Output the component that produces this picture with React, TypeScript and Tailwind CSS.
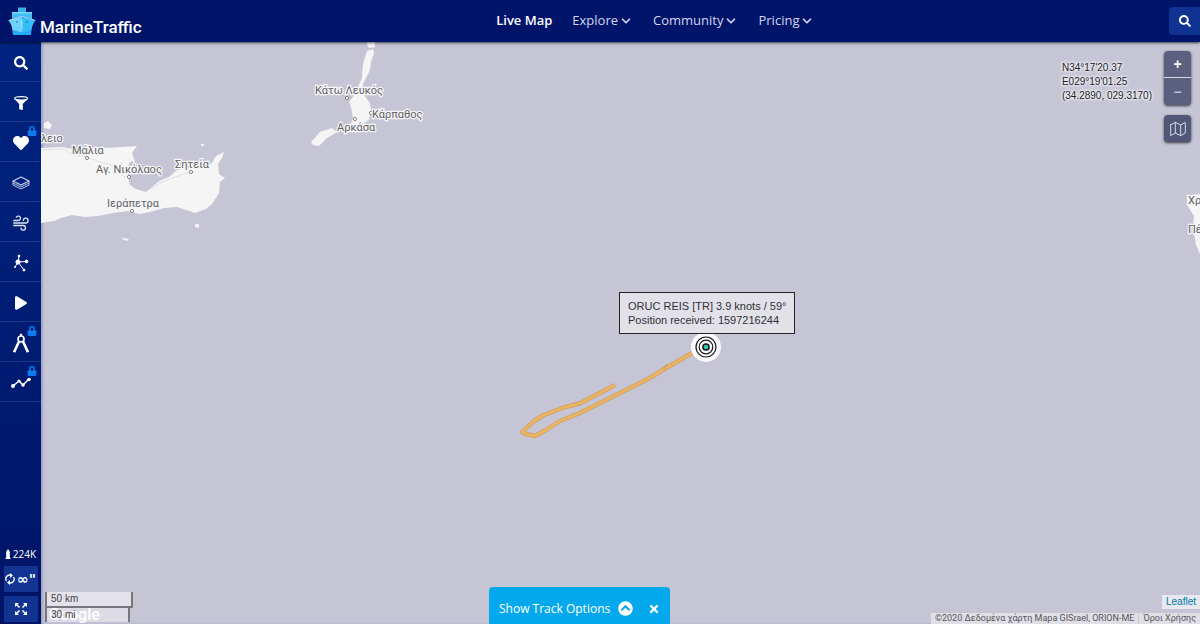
import type { ReactNode } from "react";
import { FaChevronCircleUp, FaHeart, FaLock, FaPlay, FaSearch, FaTimes } from "react-icons/fa";
import { FiChevronDown, FiMap } from "react-icons/fi";

type Tool = {
  label: string;
  icon: ReactNode;
  locked?: boolean;
};

type Place = {
  name: string;
  x: number;
  y: number;
  dot?: [number, number];
};

function FunnelIcon() {
  return (
    <svg viewBox="0 0 14 14" className="size-3.5" fill="currentColor">
      <path d="M0 2.4 5.2 8v5.2L8.8 14V8L14 2.4Z" />
      <ellipse cx="7" cy="2.4" rx="6.4" ry="1.7" fill="#00217c" stroke="currentColor" strokeWidth="1.2" />
    </svg>
  );
}

function LayersIcon() {
  return (
    <svg viewBox="0 0 18 14" className="h-3.5 w-4.5 text-[#cdd6f0]" fill="none" stroke="currentColor" strokeLinejoin="round">
      <path d="M9 1 17 5 9 9 1 5Z" strokeWidth="1.1" />
      <path d="M1 5v2l8 4 8-4V5M1 7v2l8 4 8-4V7" strokeWidth=".9" />
    </svg>
  );
}

function WindIcon() {
  return (
    <svg viewBox="0 0 16 16" className="size-4 text-[#dbe2f5]" fill="none" stroke="currentColor" strokeWidth="1.3" strokeLinecap="round">
      <path d="M.7 5.5h4.6a2.2 2.2 0 1 0-2-3.2" />
      <path d="M.7 8h12a2.4 2.4 0 1 0-2.4-2.6" />
      <path d="M.7 10.5h9.5a2.3 2.3 0 1 1-2.3 2.6" />
    </svg>
  );
}

function NetworkIcon() {
  return (
    <svg viewBox="0 0 16 18" className="h-4.5 w-4" fill="currentColor" stroke="currentColor">
      <path d="M5 8 6 2M5 8l8-.5M5 8l6 8M5 8l-3 5" fill="none" />
      <circle cx="5" cy="8" r="2.1" />
      <circle cx="6" cy="2" r=".9" />
      <circle cx="13.5" cy="7.5" r="1.4" />
      <circle cx="11" cy="16" r="1" />
      <circle cx="2" cy="13" r=".6" />
    </svg>
  );
}

function CompassIcon() {
  return (
    <svg viewBox="0 0 18 20" className="h-5 w-4.5" fill="none" stroke="currentColor">
      <circle cx="9" cy="6" r="3" strokeWidth="1.7" />
      <path d="M9 3V.8" strokeWidth="2.2" />
      <path d="M7 8.5 2 19.3M11 8.5l5 10.8" strokeWidth="2.6" />
    </svg>
  );
}

function RouteIcon() {
  return (
    <svg viewBox="0 0 20 12" className="h-3 w-5" fill="currentColor">
      <path d="m2 9 6-5 4 4 6-6" fill="none" stroke="currentColor" strokeWidth="1.5" />
      <circle cx="2" cy="9" r="2" />
      <circle cx="8" cy="4" r="1.6" />
      <circle cx="12" cy="8" r="1.8" />
      <circle cx="18" cy="2.5" r="1.8" />
    </svg>
  );
}

function ShipLogo() {
  return (
    <svg viewBox="0 0 28 28" className="h-7 w-7" aria-hidden="true">
      <path d="M10 .5h8V5h-8Z" fill="#3aaeea" />
      <path d="M4 5h20v7L14 9.5 4 12Z" fill="#43bdf5" />
      <path d="M4 5h20v1.5H4Z" fill="#7ad8fb" />
      <path d="M0 13 3.5 12.5 14 10v18H5C4.5 22 4 17 0 13Z" fill="#6dd3fc" />
      <path d="M28 13 24.500 12.500 14 10v18h9c.5-6 1-11 5-15Z" fill="#35bdf8" />
      <path d="m2 13 12-3.500L26 13" fill="none" stroke="#d2f3ff" strokeWidth=".8" />
      <path d="m5 23 9 2.500 9-2.500v5H5Z" fill="#22aaf2" />
      <path d="M14 13.500v9" stroke="#d2f3ff" strokeWidth=".7" />
      <path d="M8 15h2M18 15h2" stroke="#1173bd" strokeWidth="1" />
    </svg>
  );
}

function RefreshIcon() {
  return (
    <svg viewBox="0 0 10 12" className="h-3 w-2.5 shrink-0" fill="none" stroke="currentColor">
      <path d="M1.5 8A3.8 3.8 0 0 1 6 2.3M8.5 4A3.8 3.8 0 0 1 4 9.7" strokeWidth="1.3" />
      <path d="m5 0 3 2.5L5 5ZM5 7 2 9.5 5 12Z" fill="currentColor" stroke="none" />
    </svg>
  );
}

function ExpandIcon() {
  return (
    <svg viewBox="0 0 12 12" className="size-3" fill="currentColor" stroke="currentColor">
      <path d="m1 1 3.5 3.5M11 1 7.5 4.5M1 11l3.5-3.5M11 11 7.5 7.5" strokeWidth="1.6" />
      <path d="M0 0h4L0 4ZM12 0H8l4 4ZM0 12V8l4 4ZM12 12V8l-4 4Z" stroke="none" />
    </svg>
  );
}

const tools: Tool[] = [
  { label: "Search map", icon: <FaSearch className="size-3.5" /> },
  { label: "Filters", icon: <FunnelIcon /> },
  { label: "My fleets", icon: <FaHeart className="size-4" />, locked: true },
  { label: "Layers", icon: <LayersIcon /> },
  { label: "Weather", icon: <WindIcon /> },
  { label: "Density maps", icon: <NetworkIcon /> },
  { label: "Playback", icon: <FaPlay className="h-3.5 w-3" /> },
  { label: "Measure distance", icon: <CompassIcon />, locked: true },
  { label: "Route planner", icon: <RouteIcon />, locked: true },
];

const menus = ["Explore", "Community", "Pricing"];

const places: Place[] = [
  { name: "λειο", x: 41, y: 142 },
  { name: "Μάλια", x: 72, y: 154, dot: [87, 158] },
  { name: "Αγ. Νικόλαος", x: 96, y: 173, dot: [129, 177] },
  { name: "Σητεία", x: 175, y: 168, dot: [191, 172] },
  { name: "Ιεράπετρα", x: 107, y: 207, dot: [132, 211] },
  { name: "Κάτω Λευκός", x: 315, y: 94, dot: [347, 98] },
  { name: "Κάρπαθος", x: 372, y: 118, dot: [371, 113] },
  { name: "Αρκάσα", x: 337, y: 131, dot: [355, 119] },
  { name: "Χρ", x: 1188, y: 204 },
  { name: "Πέ", x: 1188, y: 233 },
];

const track =
  "M615 385 594 396 581 403 562 408 544 415 534 421 522 432 526 434 535 436 546 430 560 421 580 413 608 399 630 388 648 379 666 368 694 352";

function MapCanvas() {
  return (
    <svg
      viewBox="41 42 1159 582"
      preserveAspectRatio="xMinYMin slice"
      className="absolute inset-0 h-full w-full"
      role="img"
      aria-label="Vessel map"
    >
      <g fill="#f5f5f5">
        <path d="M41 148 62 147 72 149 104 148 122 147 137 146 132 153 134 160 129 163 128 176 130 185 136 189 146 192 151 188 159 181 169 177 177 170 190 168 202 168 212 163 216 156 224 152 222 158 218 164 219 174 225 178 220 182 219 193 212 204 206 209 195 213 186 210 177 207 164 208 150 212 139 214 128 211 113 213 98 216 85 217 72 215 61 218 54 221 41 223Z" />
        <path d="M44 123 48 121 52 125 50 129 44 128Z" />
        <path d="m368 41 7 0 0 6-6 1-2-4ZM367 51l6-2 1 4-3 9-1 8-7 14-1 7 1 2 3 5 4 5 1 8-2 9-9 6-8 3-2-3 3-8-2-11-2-5 6-8 4-9 3-7 1-14ZM311 142l9-10 12-4 5 4-10 6-8 8-6-1Z" />
        <path d="m1187 196 13-2v60l-4-9-3-18 1-11-7-11ZM133 156l2 6-2 2ZM195 224l4 0 0 4-4-1ZM123 238l6 1-2 2-5-2ZM201 144h3v2h-3Z" />
      </g>
      <path
        d="M41 150 64 149 71 154 85 157 101 162 115 166 125 178M151 189l13-8 23-8 8-1"
        fill="none"
        stroke="#e2e2e6"
        strokeWidth="1.2"
      />

      <g className="font-['Roboto',sans-serif] text-[11px]">
        {places.map((place) => (
          <g key={place.name}>
            {place.dot && (
              <circle cx={place.dot[0]} cy={place.dot[1]} r="1.6" fill="#fff" stroke="#777" strokeWidth=".9" />
            )}
            <text x={place.x} y={place.y} fill="#606064" stroke="#f7f7f9" strokeWidth="2.5" paintOrder="stroke">
              {place.name}
            </text>
          </g>
        ))}
      </g>

      <path d={track} fill="none" stroke="#cfa06f" strokeWidth="4.4" strokeLinejoin="round" />
      <path d={track} fill="none" stroke="#ebb45f" strokeWidth="2.8" strokeLinejoin="round" />
      <path d="m664 369 3-5" stroke="#cc8e58" />
      <circle cx="706" cy="347" r="15" fill="#fafafc" />
      <g fill="none" stroke="#15191c">
        <circle cx="706" cy="347" r="10" strokeWidth="1.2" />
        <circle cx="706" cy="347" r="6.8" strokeWidth="1.2" />
        <circle cx="706" cy="347" r="3.1" fill="#32c7b1" strokeWidth="1.5" />
      </g>
    </svg>
  );
}

function Header() {
  return (
    <header className="relative z-20 flex h-[42px] shrink-0 items-center bg-[#00146a] text-white shadow-sm shadow-black/50">
      <a href="#" className="flex items-end gap-1 pl-2">
        <ShipLogo />
        <span className="-mb-0.5 font-['Roboto',sans-serif] text-[17px] leading-5 font-medium">MarineTraffic</span>
      </a>
      <nav className="flex flex-1 items-center justify-center gap-5 font-['Open_Sans',sans-serif] text-[13px]">
        <a href="#" className="font-semibold">
          Live Map
        </a>
        {menus.map((menu) => (
          <button key={menu} type="button" className="flex items-center gap-px text-[#d2d6ed]">
            {menu}
            <FiChevronDown className="size-3.5" strokeWidth={3} />
          </button>
        ))}
      </nav>
      <button
        type="button"
        aria-label="Search"
        className="flex h-7 w-[31px] items-center justify-center rounded-l-sm bg-[#103291]"
      >
        <FaSearch className="size-3" />
      </button>
    </header>
  );
}

function Sidebar() {
  return (
    <aside className="flex w-[41px] shrink-0 flex-col bg-linear-to-b from-[#002480] to-[#001467] text-white">
      {tools.map((tool) => (
        <button
          key={tool.label}
          type="button"
          aria-label={tool.label}
          className="relative flex h-10 items-center justify-center border-b border-[#193b8c] pt-0.5"
        >
          {tool.icon}
          {tool.locked && <FaLock className="absolute top-1 right-1 size-2.5 text-[#1179f0]" />}
        </button>
      ))}
      <div className="mt-auto flex flex-col items-center gap-1 pb-0.5 font-['Open_Sans',sans-serif]">
        <div className="flex items-center gap-0.5 text-[10px] leading-4">
          <svg viewBox="0 0 6 11" className="h-2.5 w-1.5" fill="currentColor">
            <path d="M3 0 5 3v6l1 2H0l1-2V3Z" />
          </svg>
          224K
        </div>
        <button type="button" aria-label="Refresh" className="flex h-[26px] w-[34px] items-center justify-center gap-0.5 bg-[#113493]">
          <RefreshIcon />
          <span className="font-['DejaVu_Sans',sans-serif] text-[14px] leading-4 font-bold">∞"</span>
        </button>
        <button type="button" aria-label="Full screen" className="flex h-[26px] w-[34px] items-center justify-center bg-[#113493]">
          <ExpandIcon />
        </button>
      </div>
    </aside>
  );
}

export default function App() {
  return (
    <div className="flex h-screen flex-col overflow-hidden bg-[#c6c5d6]">
      <Header />
      <div className="flex min-h-0 flex-1">
        <Sidebar />
        <main className="relative min-w-0 flex-1 overflow-hidden font-['Liberation_Sans',sans-serif] shadow-[inset_2px_0_2px_#9ca4c5]">
          <MapCanvas />

          <div className="absolute top-[250px] left-[578px] border border-[#252529] bg-[#e2e1e8] px-2 py-1.5 text-[11px] leading-[14px] whitespace-nowrap text-[#303038]">
            <p>ORUC REIS [TR] 3.9 knots / 59°</p>
            <p>Position received: 1597216244</p>
          </div>

          <div className="absolute top-[9px] right-[9px] flex items-start gap-3">
            <div className="pt-2.5 text-[10px] leading-[14px] text-[#202028] [text-shadow:0_0_3px_white,0_0_3px_white,0_0_5px_white]">
              <p>N34°17'20.37</p>
              <p>E029°19'01.25</p>
              <p>(34.2890, 029.3170)</p>
            </div>
            <div className="flex flex-col gap-2.5 text-white">
              <div className="flex flex-col overflow-hidden rounded-sm bg-[#5b6081] text-sm font-bold shadow-sm shadow-black/60">
                <button type="button" aria-label="Zoom in" className="h-[27px] w-[27px] border-b border-[#d8d8e4]">
                  +
                </button>
                <button type="button" aria-label="Zoom out" className="h-[27px] w-[27px] text-[#bfc1d0]">
                  −
                </button>
              </div>
              <button
                type="button"
                aria-label="Map style"
                className="flex size-[27px] items-center justify-center rounded-sm bg-[#515777] text-[#d5d7e2] shadow-sm shadow-black/60"
              >
                <FiMap className="size-4" strokeWidth={1.5} />
              </button>
            </div>
          </div>

          <div className="absolute bottom-0.5 left-1 text-[10px] leading-[14px] text-[#444]">
            <span className="absolute bottom-0 left-1 font-['Roboto',sans-serif] text-base leading-[14px] font-medium text-white">
              Google
            </span>
            <p className="relative w-[88px] border-x-2 border-b-2 border-[#77777b] bg-white/50 px-1">50 km</p>
            <p className="relative w-[85px] border-x-2 border-[#77777b] bg-white/40 px-1">30 mi</p>
          </div>

          <div className="absolute bottom-0 left-[448px] flex h-[37px] w-[181px] items-center rounded-t-sm bg-[#04a9ed] px-2.5 pt-1.5 font-['Open_Sans',sans-serif] text-[12px] text-white">
            <button type="button" className="flex items-center gap-2">
              Show Track Options
              <FaChevronCircleUp className="size-[15px]" />
            </button>
            <button type="button" aria-label="Close" className="ml-auto">
              <FaTimes className="size-3" />
            </button>
          </div>

          <div className="absolute right-0 bottom-0 flex flex-col items-end font-['Roboto',sans-serif] text-[9px] leading-[11px] text-[#55555b]">
            <a href="#" className="mb-1 bg-white/60 px-1 font-['Liberation_Sans',sans-serif] text-[10px] leading-[14px] text-[#0078a8]">
              Leaflet
            </a>
            <div className="flex bg-[#e0dfe6]">
              <span className="px-1">©2020 Δεδομένα χάρτη Mapa GISrael, ORION-ME</span>
              <a href="#" className="border-l border-[#c9c8d2] px-1">
                Όροι Χρήσης
              </a>
            </div>
          </div>
        </main>
      </div>
    </div>
  );
}
